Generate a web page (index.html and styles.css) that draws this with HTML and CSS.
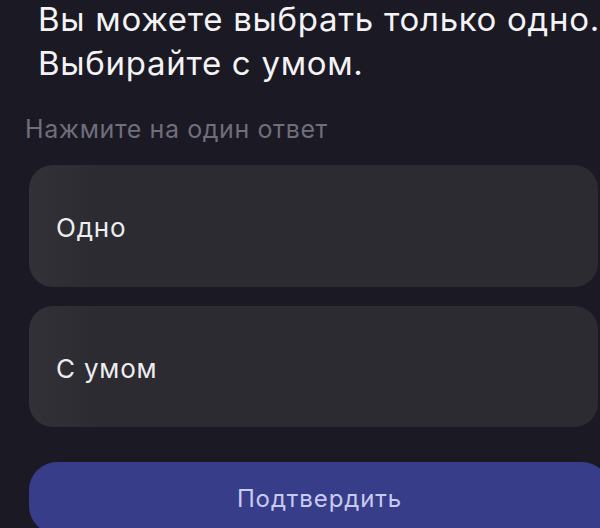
FILE: index.html
```html
<!DOCTYPE html>
<html lang="ru">
<head>
<meta charset="utf-8">
<title>Выбор</title>
<link rel="stylesheet" href="styles.css">
</head>
<body>
<main class="screen">
  <h1 class="title">Вы можете выбрать только одно.<br>Выбирайте с умом.</h1>
  <p class="hint">Нажмите на один ответ</p>
  <div class="options">
    <button class="option" type="button">Одно</button>
    <button class="option" type="button">С умом</button>
  </div>
  <button class="confirm" type="button">Подтвердить</button>
</main>
</body>
</html>
```
FILE: styles.css
```css
html, body {
  margin: 0;
  padding: 0;
  background: #1a1924;
  width: 600px;
  height: 528px;
  overflow: hidden;
}

.screen {
  display: flex;
  flex-direction: column;
  padding: 0 2px 0 29px;
  font-family: Inter, "Liberation Sans", sans-serif;
}

.title {
  margin: -3px 0 0 9px;
  font-size: 33px;
  line-height: 44px;
  font-weight: 400;
  letter-spacing: 0.7px;
  color: #f3f3f5;
  white-space: nowrap;
}

.hint {
  margin: 29px 0 0 -4px;
  font-size: 25px;
  line-height: 30px;
  letter-spacing: 0.6px;
  color: #6f6e7a;
}

.options {
  display: flex;
  flex-direction: column;
  gap: 19px;
  margin-top: 21px;
}

.option {
  display: flex;
  align-items: center;
  height: 122px;
  padding: 3px 0 0 27px;
  border: 0;
  border-radius: 24px;
  background: linear-gradient(90deg, #323138 0%, #2c2b31 12%, #2c2b31 100%);
  color: #ededf0;
  font-family: inherit;
  font-size: 26px;
  letter-spacing: 0.8px;
  text-align: left;
}

.option + .option {
  height: 121px;
}

.confirm {
  margin: 35px -12px 0 0;
  height: 72px;
  border: 0;
  border-radius: 28px;
  background: #373d88;
  color: #c8cbf1;
  font-family: inherit;
  font-size: 24px;
  letter-spacing: 0.9px;
  padding: 0;
}
```
